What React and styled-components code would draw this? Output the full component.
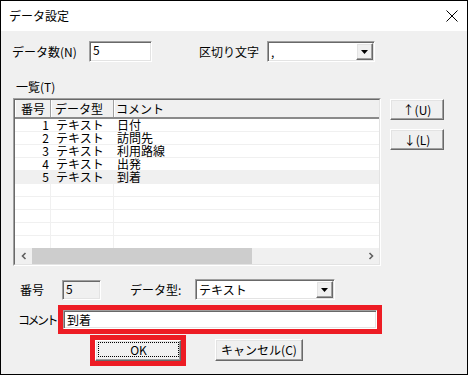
import React from 'react';
import styled, { createGlobalStyle, css } from 'styled-components';

const Global = createGlobalStyle`
  html, body { margin: 0; padding: 0; background: #fff; }
  body {
    font-family: "Noto Sans CJK JP", "Noto Sans", sans-serif;
    font-size: 12px;
    color: #000;
  }
  * { box-sizing: border-box; }
`;

const sunken = css`
  border: 1px solid;
  border-color: #a0a0a0 #fff #fff #a0a0a0;
  box-shadow: inset 1px 1px 0 #696969, inset -1px -1px 0 #e3e3e3;
`;

const raised = css`
  border: 1px solid;
  border-color: #fff #696969 #696969 #fff;
  box-shadow: inset -1px -1px 0 #a0a0a0, inset 1px 1px 0 #e3e3e3;
`;

const Window = styled.div`
  width: 468px;
  height: 375px;
  border: 1px solid #000;
  background: #f0f0f0;
  display: flex;
  flex-direction: column;
`;

const TitleBar = styled.div`
  height: 30px;
  flex: none;
  background: #fff;
  display: flex;
  align-items: center;
  justify-content: space-between;
  padding: 0 9px 0 8px;
  line-height: 14px;
`;

const CloseIcon = styled.svg`
  width: 12px;
  height: 12px;
  display: block;
`;

const Body = styled.div`
  flex: 1;
  display: flex;
  flex-direction: column;
  padding: 10px 0 0 11px;
`;

const Row = styled.div`
  display: flex;
  align-items: ${(p) => p.$align || 'center'};
  height: ${(p) => (p.$h ? `${p.$h}px` : 'auto')};
  margin-top: ${(p) => p.$mt || 0}px;
  flex: none;
`;

const Label = styled.div`
  width: ${(p) => p.$w}px;
  margin-left: ${(p) => p.$ml || 0}px;
  flex: none;
  line-height: 14px;
  white-space: nowrap;
  letter-spacing: ${(p) => p.$ls || 0}px;
`;

const TextBox = styled.div`
  ${sunken};
  width: ${(p) => (p.$w ? `${p.$w}px` : '100%')};
  height: ${(p) => p.$h}px;
  background: ${(p) => p.$bg || '#fff'};
  flex: none;
  padding: ${(p) => (p.$top ? '1px 0 0 3px' : '0 0 0 3px')};
  display: flex;
  align-items: ${(p) => (p.$top ? 'flex-start' : 'center')};
  line-height: 14px;
  margin-left: ${(p) => p.$ml || 0}px;
`;

const Combo = styled.div`
  ${sunken};
  width: ${(p) => p.$w}px;
  height: 21px;
  flex: none;
  background: #fff;
  display: flex;
  align-items: center;
  padding: 0 0 0 3px;
`;

const ComboValue = styled.div`
  flex: 1;
  line-height: 14px;
`;

const ComboButton = styled.div`
  ${raised};
  width: 17px;
  height: 17px;
  background: #f0f0f0;
  display: flex;
  align-items: center;
  justify-content: center;
  margin-right: 1px;
`;

const Arrow = styled.svg`
  width: 7px;
  height: 4px;
  display: block;
`;

const ListWrap = styled.div`
  display: flex;
  align-items: flex-start;
  margin-top: 4px;
  flex: none;
`;

const ListView = styled.div`
  width: 368px;
  height: 168px;
  margin-left: 1px;
  border: 1px solid;
  border-color: #a0a0a0 #fff #fff #a0a0a0;
  flex: none;
`;

const ListInner = styled.div`
  width: 100%;
  height: 100%;
  border: 1px solid;
  border-color: #696969 #e3e3e3 #e3e3e3 #696969;
  background: #fff;
  display: flex;
  flex-direction: column;
  overflow: hidden;
`;

const cols = '36px 63px 1fr';

const Header = styled.div`
  display: grid;
  grid-template-columns: ${cols};
  height: 19px;
  flex: none;
  background: #f0f0f0;
  border-bottom: 2px solid #8a8a8a;
`;

const HeaderCell = styled.div`
  padding-left: ${(p) => p.$pl}px;
  border-right: 1px solid #a0a0a0;
  box-shadow: inset 1px 0 0 #fff;
  line-height: 17px;
  white-space: nowrap;
  &:last-child { border-right: none; }
`;

const Rows = styled.div`
  height: 129px;
  flex: none;
  overflow: hidden;
`;

const ItemRow = styled.div`
  display: grid;
  grid-template-columns: ${cols};
  height: 13px;
  box-shadow: inset 0 -1px 0 #f0f0f0;
  background: ${(p) => (p.$sel ? '#f0f0f0' : '#fff')};
`;

const Cell = styled.div`
  line-height: 12px;
  white-space: nowrap;
  text-align: ${(p) => (p.$right ? 'right' : 'left')};
  padding: ${(p) => (p.$right ? '0 2px 0 0' : `0 0 0 ${p.$pl || 0}px`)};
  border-right: ${(p) => (p.$grid ? '1px solid #f0f0f0' : 'none')};
`;

const ScrollBar = styled.div`
  height: 16px;
  flex: none;
  display: flex;
  background: #f0f0f0;
`;

const ScrollArrow = styled.div`
  width: 17px;
  display: flex;
  align-items: center;
  justify-content: center;
  flex: none;
`;

const Thumb = styled.div`
  width: 220px;
  background: #cdcdcd;
  flex: none;
`;

const Track = styled.div`
  flex: 1;
`;

const Chevron = styled.svg`
  width: 6px;
  height: 8px;
  display: block;
`;

const SideButtons = styled.div`
  display: flex;
  flex-direction: column;
  gap: 9px;
  margin: 1px 0 0 9px;
`;

const Button = styled.div`
  ${raised};
  width: ${(p) => p.$w}px;
  height: ${(p) => p.$h}px;
  margin: ${(p) => p.$m || 0};
  background: #f0f0f0;
  display: flex;
  align-items: center;
  justify-content: center;
  line-height: 14px;
  flex: none;
  padding: ${(p) => (p.$focus ? '1px 1px 3px 2px' : '0')};
`;

const FocusRing = styled.div`
  flex: 1;
  align-self: stretch;
  border: 1px dotted #000;
  display: flex;
  align-items: center;
  justify-content: center;
`;

const RedFrame = styled.div`
  border: 5px solid #ed1c24;
  width: ${(p) => p.$w}px;
  height: ${(p) => p.$h}px;
  margin-left: ${(p) => p.$ml || 0}px;
  flex: none;
  display: flex;
  align-items: center;
`;

const items = [
  ['1', 'テキスト', '日付'],
  ['2', 'テキスト', '訪問先'],
  ['3', 'テキスト', '利用路線'],
  ['4', 'テキスト', '出発'],
  ['5', 'テキスト', '到着'],
];

const DropArrow = () => (
  <Arrow viewBox="0 0 7 4">
    <polygon points="0,0 7,0 3.5,4" fill="#000" />
  </Arrow>
);

export default function App() {
  return (
    <>
      <Global />
      <Window>
        <TitleBar>
          <span>データ設定</span>
          <CloseIcon viewBox="0 0 12 12">
            <path d="M0.5 0.5 L11.5 11.5 M11.5 0.5 L0.5 11.5" stroke="#000" strokeWidth="1" fill="none" />
          </CloseIcon>
        </TitleBar>
        <Body>
          <Row $h={21}>
            <Label $w={77}>データ数(N)</Label>
            <TextBox $w={63} $h={21} $top>5</TextBox>
            <Label $w={68} $ml={47}>区切り文字</Label>
            <Combo $w={108}>
              <ComboValue>,</ComboValue>
              <ComboButton>
                <DropArrow />
              </ComboButton>
            </Combo>
          </Row>
          <Row $h={14} $mt={18}>
            <Label $w={60} $ml={4}>一覧(T)</Label>
          </Row>
          <ListWrap>
            <ListView>
              <ListInner>
                <Header>
                  <HeaderCell $pl={6}>番号</HeaderCell>
                  <HeaderCell $pl={4}>データ型</HeaderCell>
                  <HeaderCell $pl={2}>コメント</HeaderCell>
                </Header>
                <Rows>
                  {items.map(([n, t, c], i) => (
                    <ItemRow key={n} $sel={i === 4}>
                      <Cell $right>{n}</Cell>
                      <Cell $pl={5}>{t}</Cell>
                      <Cell $pl={3}>{c}</Cell>
                    </ItemRow>
                  ))}
                  {[0, 1, 2, 3, 4].map((k) => (
                    <ItemRow key={`e${k}`}>
                      <Cell $grid />
                      <Cell $grid />
                      <Cell />
                    </ItemRow>
                  ))}
                </Rows>
                <ScrollBar>
                  <ScrollArrow>
                    <Chevron viewBox="0 0 6 8">
                      <path d="M4.5 1 L1.5 4 L4.5 7" stroke="#606060" strokeWidth="1.6" fill="none" />
                    </Chevron>
                  </ScrollArrow>
                  <Thumb />
                  <Track />
                  <ScrollArrow>
                    <Chevron viewBox="0 0 6 8">
                      <path d="M1.5 1 L4.5 4 L1.5 7" stroke="#606060" strokeWidth="1.6" fill="none" />
                    </Chevron>
                  </ScrollArrow>
                </ScrollBar>
              </ListInner>
            </ListView>
            <SideButtons>
              <Button $w={54} $h={21}>↑(U)</Button>
              <Button $w={54} $h={21}>↓(L)</Button>
            </SideButtons>
          </ListWrap>
          <Row $h={21} $mt={13}>
            <Label $w={42} $ml={8}>番号</Label>
            <TextBox $w={39} $h={20} $bg="#f0f0f0" $top>5</TextBox>
            <Label $w={65} $ml={29}>データ型:</Label>
            <Combo $w={140}>
              <ComboValue>テキスト</ComboValue>
              <ComboButton>
                <DropArrow />
              </ComboButton>
            </Combo>
          </Row>
          <Row $h={29} $mt={5}>
            <Label $w={40} $ml={6} $ls={-2.5}>コメント</Label>
            <RedFrame $w={324} $h={29}>
              <TextBox $h={19}>到着</TextBox>
            </RedFrame>
          </Row>
          <Row $mt={1} $align="flex-start">
            <RedFrame $w={96} $h={31} $ml={78}>
              <Button $w={86} $h={21} $focus>
                <FocusRing>OK</FocusRing>
              </Button>
            </RedFrame>
            <Button $w={88} $h={22} $m="4px 0 0 29px">キャンセル(C)</Button>
          </Row>
        </Body>
      </Window>
    </>
  );
}
